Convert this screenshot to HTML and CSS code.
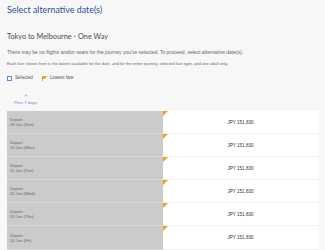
FILE: index.html
```html
<!DOCTYPE html>
<html lang="en">
<head>
<meta charset="utf-8">
<title>Select alternative date(s)</title>
<link rel="stylesheet" href="styles.css">
</head>
<body>
<h1 class="title">Select alternative date(s)</h1>
<h2 class="route">Tokyo to Melbourne - One Way</h2>
<p class="note">There may be no flights and/or seats for the journey you've selected. To proceed, select alternative date(s).</p>
<p class="note note-2">Each fare shown here is the lowest available for the date, and for the entire journey, selected fare type, and one adult only.</p>
<div class="legend">
  <span class="legend-item"><span class="key-selected"></span>Selected</span>
  <span class="legend-item"><span class="key-lowest"></span>Lowest fare</span>
</div>
<div class="prev">
  <span class="chev"><svg width="4" height="3" viewBox="0 0 4 3"><path d="M0.4 2.4 L2 0.8 L3.6 2.4" fill="none" stroke="#6b8fd0" stroke-width="0.6"/></svg></span>
  <span class="prev-label">Prev 7 days</span>
</div>
<div class="list">
  <div class="row"><div class="day"><span>Depart</span><span>09 Jun (Sun)</span></div><div class="fare"><span class="flag"></span>JPY 151,830</div></div>
  <div class="row"><div class="day"><span>Depart</span><span>10 Jun (Mon)</span></div><div class="fare"><span class="flag"></span>JPY 151,830</div></div>
  <div class="row"><div class="day"><span>Depart</span><span>11 Jun (Tue)</span></div><div class="fare"><span class="flag"></span>JPY 151,830</div></div>
  <div class="row"><div class="day"><span>Depart</span><span>12 Jun (Wed)</span></div><div class="fare"><span class="flag"></span>JPY 151,830</div></div>
  <div class="row"><div class="day"><span>Depart</span><span>13 Jun (Thu)</span></div><div class="fare"><span class="flag"></span>JPY 151,830</div></div>
  <div class="row"><div class="day"><span>Depart</span><span>14 Jun (Fri)</span></div><div class="fare"><span class="flag"></span>JPY 151,830</div></div>
  <div class="row row-last"><div class="day"></div><div class="fare"><span class="flag"></span></div></div>
</div>
</body>
</html>
```
FILE: styles.css
```css
html, body { margin: 0; }
body {
  padding: 0 7px;
  background: #f7f7f7;
  font-family: "Liberation Sans", Arial, sans-serif;
  color: #555;
  overflow: hidden;
  height: 250px;
}
.title {
  margin: 4px 0 0;
  font-family: Lato, "Open Sans", sans-serif;
  font-weight: 400;
  font-size: 8.9px;
  line-height: 11px;
  color: #2f4f8f;
}
.route {
  margin: 17px 0 0;
  font-family: Lato, "Open Sans", sans-serif;
  font-weight: 400;
  font-size: 7.3px;
  line-height: 9px;
  color: #4a4a4a;
}
.note {
  margin: 8px 0 0;
  font-size: 5px;
  line-height: 6px;
  color: #666;
}
.note-2 { margin-top: 6px; font-size: 4.1px; }
.legend {
  display: flex;
  gap: 9px;
  margin-top: 8px;
  font-size: 4.6px;
  line-height: 6px;
  color: #555;
}
.legend-item { display: flex; align-items: center; gap: 3px; }
.key-selected {
  width: 3px; height: 3px;
  border: 1px solid #5f86d6;
  background: #fff;
}
.key-lowest {
  width: 5px; height: 5px;
  background: linear-gradient(135deg, #f5a011 50%, #fff 50%);
}
.prev {
  display: flex;
  flex-direction: column;
  align-items: center;
  width: 37px;
  margin-top: 13px;
  color: #5d86d2;
  font-size: 4.4px;
  line-height: 5px;
}
.chev { display: flex; height: 4px; }
.prev-label { margin-top: 2px; }
.list { margin-top: 6px; }
.row {
  display: grid;
  grid-template-columns: 156px 1fr;
  height: 23.1px;
  box-sizing: border-box;
  border-bottom: 1px solid #f1f1f1;
}
.day {
  background: #cbcbcb;
  display: flex;
  flex-direction: column;
  justify-content: center;
  padding-left: 3px;
  font-size: 4.2px;
  line-height: 5px;
  color: #666;
  border-bottom: 1px solid #d8d8d8;
  margin-bottom: -1px;
}
.fare {
  position: relative;
  background: #fff;
  display: flex;
  align-items: center;
  justify-content: center;
  font-size: 4.6px;
  color: #333;
}
.flag {
  position: absolute;
  left: 0; top: 0;
  width: 0; height: 0;
  border-top: 5px solid #f5a011;
  border-right: 5px solid transparent;
}
```
